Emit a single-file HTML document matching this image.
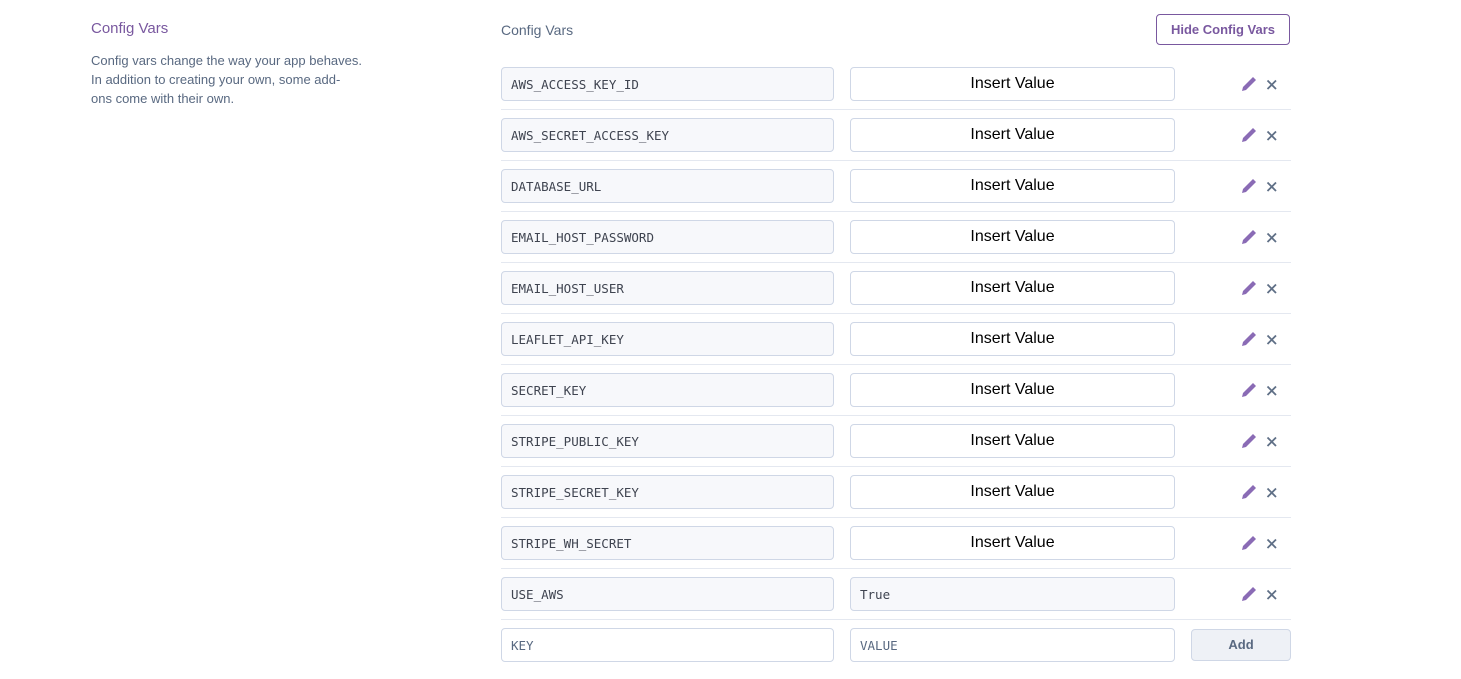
<!DOCTYPE html><html><head><style>
body{margin:0;width:1461px;height:679px;background:#fff;font-family:"Liberation Sans",sans-serif;position:relative;overflow:hidden}
.a{position:absolute}
.k{position:absolute;left:501px;height:32px;border:1px solid #cfd7e6;border-radius:4px;background:#f7f8fb;font:12.5px "DejaVu Sans Mono","Liberation Mono",monospace;color:#3f4450;line-height:33px;padding-left:9px;box-sizing:content-box;width:322px}
.v{position:absolute;left:850px;width:323px;height:32px;border:1px solid #cfd7e6;border-radius:4px;background:#fff;box-sizing:content-box}
.v span{position:absolute;left:0;right:0;text-align:center;top:7px;font:16px "Liberation Sans",Arial,sans-serif;color:#000}
.sep{position:absolute;left:501px;width:790px;height:1px;background:#e4e8f0}
.ic{position:absolute;left:1241px}
</style></head><body>
<div class="a" style="left:91px;top:20px;font-size:15px;color:#79589f">Config Vars</div>
<div class="a" style="left:91px;top:51px;font-size:13px;line-height:19px;color:#596981;width:300px">Config vars change the way your app behaves.<br>In addition to creating your own, some add-<br>ons come with their own.</div>
<div class="a" style="left:501px;top:22px;font-size:14px;color:#596981">Config Vars</div>
<div class="a" style="left:1156px;top:14px;width:132px;height:29px;border:1px solid #79589f;border-radius:4px;color:#79589f;font-size:13px;font-weight:bold;text-align:center;line-height:29px">Hide Config Vars</div>
<div id="rows"></div>
<script>
var keys=["AWS_ACCESS_KEY_ID","AWS_SECRET_ACCESS_KEY","DATABASE_URL","EMAIL_HOST_PASSWORD","EMAIL_HOST_USER","LEAFLET_API_KEY","SECRET_KEY","STRIPE_PUBLIC_KEY","STRIPE_SECRET_KEY","STRIPE_WH_SECRET","USE_AWS"];
var h="";
keys.forEach(function(k,i){var y=67+51*i;
h+='<div class="k" style="top:'+y+'px">'+k+'</div>';
if(k=="USE_AWS")h+='<div class="v" style="top:'+y+'px;background:#f7f8fb;font:12.5px \'DejaVu Sans Mono\',monospace;line-height:33px;padding-left:9px;width:314px;color:#3f4450">True</div>';
else h+='<div class="v" style="top:'+y+'px"><span>Insert Value</span></div>';
h+='<svg class="ic" style="top:'+(y+8)+'px" width="40" height="18" viewBox="0 0 40 18"><path d="M1 16 L2 12 L12 2 L15 5 L5 15 Z" fill="#8a6bb5"/><path d="M26.5 5.5 L35 14 M35 5.5 L26.5 14" stroke="#5f6f86" stroke-width="1.8"/></svg>';
h+='<div class="sep" style="top:'+(y+42)+'px"></div>';});
var y=628;
h+='<div class="k" style="top:'+y+'px;background:#fff;color:#596981">KEY</div>';
h+='<div class="v" style="top:'+y+'px;font:12.5px \'DejaVu Sans Mono\',monospace;line-height:33px;padding-left:9px;width:314px;color:#596981">VALUE</div>';
h+='<div class="a" style="left:1191px;top:629px;width:98px;height:30px;border:1px solid #cfd7e6;border-radius:4px;background:#eef1f6;color:#596981;font-size:13px;font-weight:bold;text-align:center;line-height:30px">Add</div>';
document.getElementById("rows").innerHTML=h;
</script>
</body></html>
